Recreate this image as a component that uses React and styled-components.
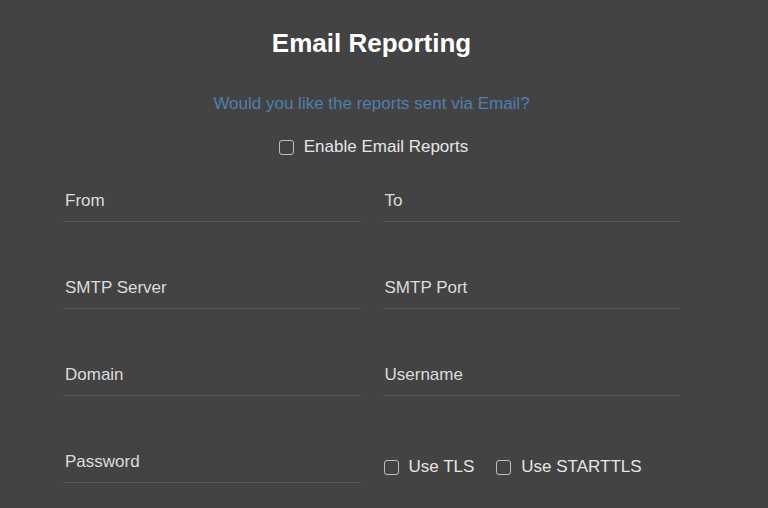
import styled, { createGlobalStyle } from "styled-components"

const GlobalStyle = createGlobalStyle`
html, body {
  margin: 0;
  padding: 0;
  background-color: #434343;
  font-family: "Liberation Sans", Arial, sans-serif;
}
`;

const Page = styled.div`
width: 617px;
height: 508px;
margin-left: 63px;
padding-top: 28px;
box-sizing: border-box;
overflow: hidden;
`;

const Title = styled.h2`
margin: 0;
text-align: center;
font-size: 26px;
font-weight: bold;
color: #ffffff;
line-height: 30px;
`;

const Question = styled.p`
margin: 36px 0 0;
text-align: center;
font-size: 17px;
line-height: 20px;
color: #4f7fb0;
`;

const CheckRow = styled.div`
display: flex;
align-self: start;
justify-content: ${(p) => (p.center ? "center" : "flex-start")};
align-items: center;
gap: 22px;
margin-top: ${(p) => p.top || 0}px;
padding-left: ${(p) => p.indent || 0}px;
`;

const CheckLabel = styled.label`
display: flex;
align-items: center;
gap: 10px;
font-size: 17px;
line-height: 20px;
color: #e6e6e6;
`;

const Box = styled.input`
appearance: none;
margin: 0;
width: 15px;
height: 15px;
border: 1.5px solid #bdbdbd;
border-radius: 3px;
background: transparent;
box-sizing: border-box;
`;

const Grid = styled.div`
display: grid;
grid-template-columns: 1fr 1fr;
column-gap: 22px;
margin-top: 34px;
`;

const Field = styled.div`
display: flex;
flex-direction: column;
height: 87px;
padding-left: 2px;
`;

const Label = styled.label`
font-size: 17px;
line-height: 20px;
color: #dcdcdc;
`;

const Input = styled.input`
outline: none;
border: none;
border-bottom: 1px solid #575757;
background: transparent;
height: 10px;
padding: 0;
margin-left: -2px;
color: #fff;
font-size: 15px;
`;

export default function App() {
  return (
    <>
      <GlobalStyle />
      <Page>
        <Title>Email Reporting</Title>
        <Question>Would you like the reports sent via Email?</Question>
        <CheckRow center top={23} indent={4}>
          <CheckLabel>
            <Box type="checkbox" />
            Enable Email Reports
          </CheckLabel>
        </CheckRow>
        <Grid>
          <Field>
            <Label>From</Label>
            <Input type="text" />
          </Field>
          <Field>
            <Label>To</Label>
            <Input type="text" />
          </Field>
          <Field>
            <Label>SMTP Server</Label>
            <Input type="text" />
          </Field>
          <Field>
            <Label>SMTP Port</Label>
            <Input type="text" />
          </Field>
          <Field>
            <Label>Domain</Label>
            <Input type="text" />
          </Field>
          <Field>
            <Label>Username</Label>
            <Input type="text" />
          </Field>
          <Field>
            <Label>Password</Label>
            <Input type="password" />
          </Field>
          <CheckRow top={5} indent={1}>
            <CheckLabel>
              <Box type="checkbox" />
              Use TLS
            </CheckLabel>
            <CheckLabel>
              <Box type="checkbox" />
              Use STARTTLS
            </CheckLabel>
          </CheckRow>
        </Grid>
      </Page>
    </>
  )
}
